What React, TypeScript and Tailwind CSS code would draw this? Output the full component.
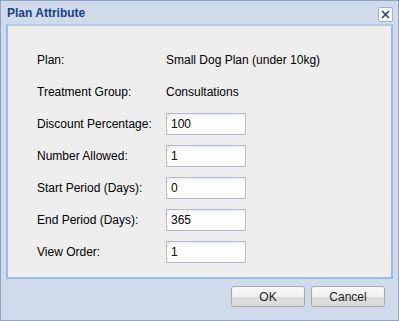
import React from "react";

const rows: { label: string; value: string; input: boolean }[] = [
  { label: "Plan:", value: "Small Dog Plan (under 10kg)", input: false },
  { label: "Treatment Group:", value: "Consultations", input: false },
  { label: "Discount Percentage:", value: "100", input: true },
  { label: "Number Allowed:", value: "1", input: true },
  { label: "Start Period (Days):", value: "0", input: true },
  { label: "End Period (Days):", value: "365", input: true },
  { label: "View Order:", value: "1", input: true },
];

export default function App() {
  return (
    <div
      className="w-[399px] h-[321px] bg-white"
      style={{ fontFamily: '"Liberation Sans", Arial, sans-serif' }}
    >
      <div className="w-[399px] h-[321px] border border-[#8ea4c4] bg-[#cfdbea] flex flex-col">
        <div className="h-[23px] flex items-center justify-between pl-[6px] pr-[5px]">
          <span className="text-[12px] font-bold text-[#15428b] leading-none mt-[1px]">Plan Attribute</span>
          <div className="w-[15px] h-[15px] mt-[3px] rounded-[2px] border border-[#9ab4db] bg-white flex items-center justify-center">
            <svg width="11" height="11" viewBox="0 0 11 11">
              <path d="M2 2 L9 9 M9 2 L2 9" stroke="#1f3f8f" strokeWidth="1.6" />
            </svg>
          </div>
        </div>
        <div className="mx-[5px] h-[255px] border-2 border-[#99bbe8] border-t-[#b5cbe9] bg-[#eeeeee] pt-[23px] pl-[29px]">
          <div className="flex flex-col gap-[10px]">
            {rows.map((r) => (
              <div key={r.label} className="flex items-center h-[22px]">
                <span className="w-[129px] text-[12px] text-black">{r.label}</span>
                {r.input ? (
                  <div className="w-[80px] h-[22px] border border-[#b5b8c8] bg-gradient-to-b from-[#eef0f2] to-white to-[30%] flex items-center pl-[4px] text-[12px] text-black">
                    {r.value}
                  </div>
                ) : (
                  <span className="text-[12px] text-black">{r.value}</span>
                )}
              </div>
            ))}
          </div>
        </div>
        <div className="flex justify-end gap-[6px] pr-[13px] pt-[7px]">
          {["OK", "Cancel"].map((b) => (
            <div
              key={b}
              className="w-[74px] h-[21px] rounded-[3px] border border-[#a8a8a8] flex items-center justify-center text-[12px] text-[#222]"
              style={{ background: "linear-gradient(#f7f7f7 0%, #efefef 50%, #dcdcdc 50%, #dcdcdc 100%)" }}
            >
              {b}
            </div>
          ))}
        </div>
      </div>
    </div>
  );
}
